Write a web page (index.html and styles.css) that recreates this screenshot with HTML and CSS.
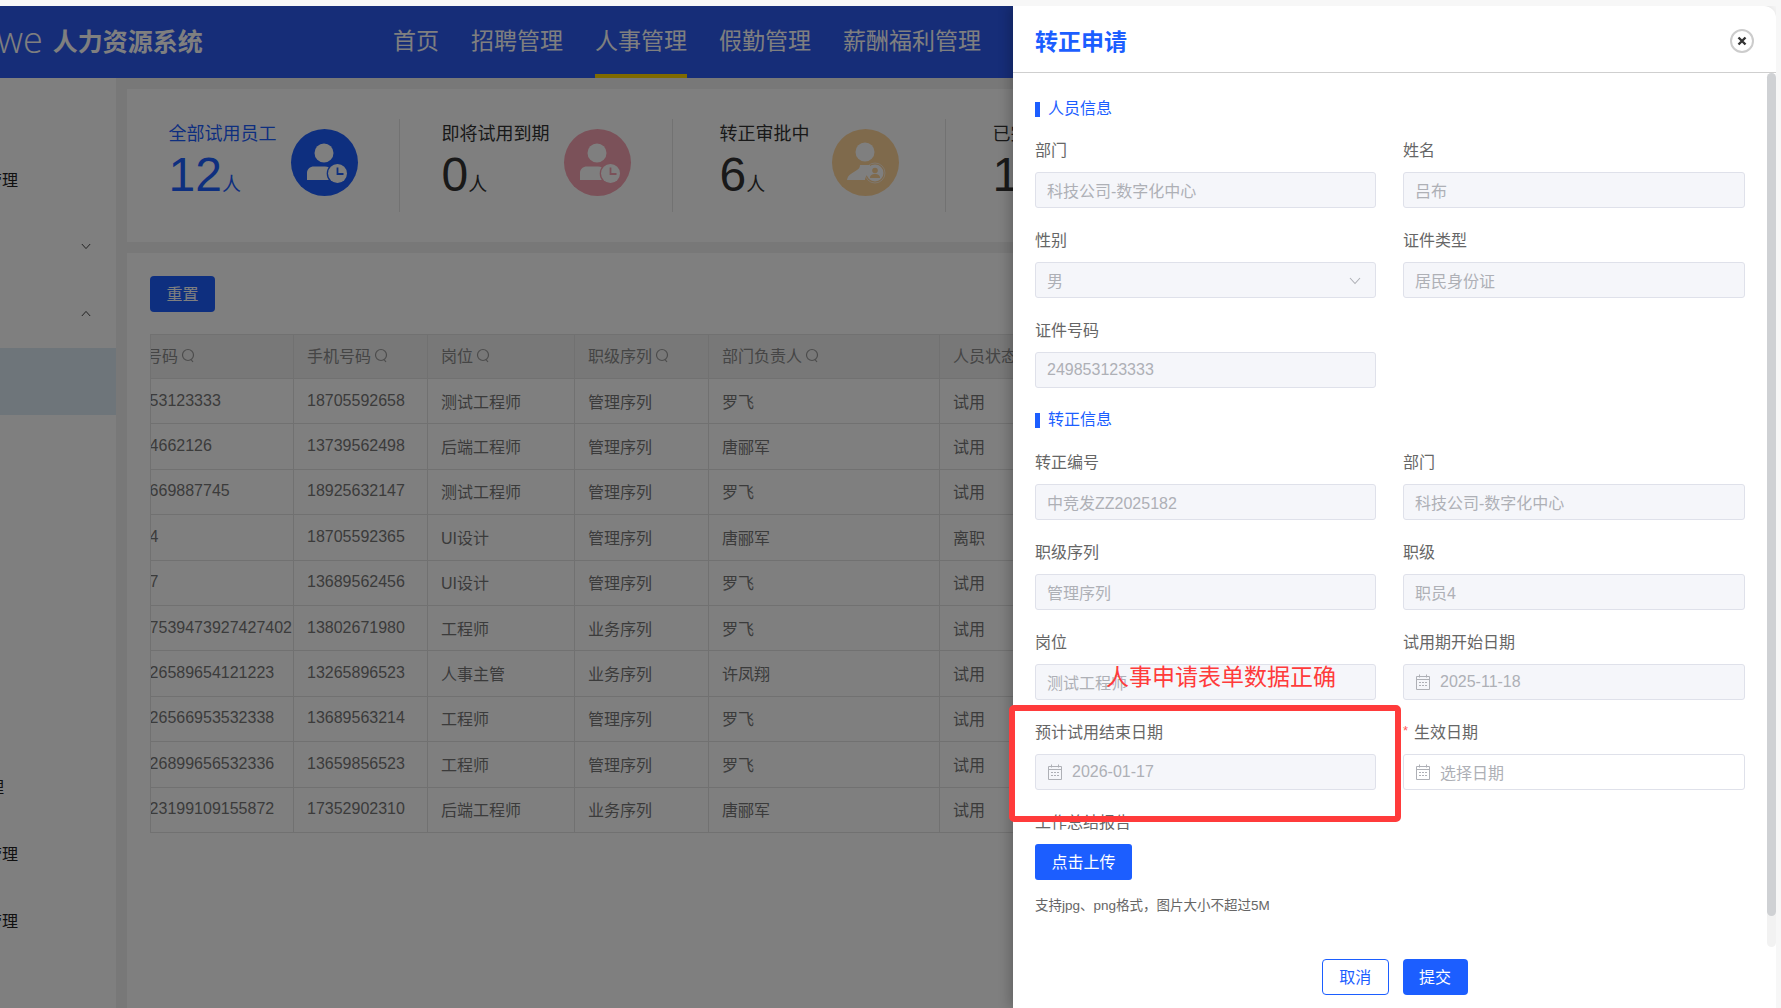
FILE: index.html
```html
<!DOCTYPE html>
<html lang="zh-CN">
<head>
<meta charset="utf-8">
<title>转正申请</title>
<link rel="stylesheet" href="styles.css">
</head>
<body>
<svg class="defs" width="0" height="0">
  <symbol id="cal" viewBox="0 0 14 16"><path d="M.5 2.5h13v13H.5zM.5 5.5h13M3.5 .5v3M10.5 .5v3" fill="none" stroke="currentColor"/><path d="M3 8h2v1H3zM6 8h2v1H6zM9 8h2v1H9zM3 11h2v1H3zM6 11h2v1H6zM9 11h2v1H9z" fill="currentColor"/></symbol>
  <symbol id="sch" viewBox="0 0 14 16"><circle cx="7" cy="7" r="5.5" fill="none" stroke="currentColor" stroke-width="1.2"/><path d="M10 11.5l2 2.5" stroke="currentColor" stroke-width="1.2"/></symbol>
  <symbol id="chev" viewBox="0 0 12 8"><path d="M1 1l5 5.5L11 1" fill="none" stroke="currentColor" stroke-width="1.1"/></symbol>
  <symbol id="user-clock" viewBox="0 0 67 67"><circle cx="33" cy="24" r="9.5" fill="#fff"/><path d="M16 51V44c0-4 3-6.500 7-6.500h11c3 0 5 1 5 3v10.500z" fill="#fff"/><circle cx="46.500" cy="44.500" r="10.800" fill="currentColor"/><circle cx="46.500" cy="44.500" r="9.500" fill="#fff"/><path d="M46.500 38.500v6.500h6" fill="none" stroke="currentColor" stroke-width="1.800"/></symbol>
  <symbol id="user-badge" viewBox="0 0 67 67"><circle cx="33" cy="23" r="9.500" fill="#fff"/><path d="M15 51c1-6 6-7 10-10 2-1 3-3 3-5h10c0 3 2 5 4 6-6 2-9 5-9 9z" fill="#fff"/><circle cx="43" cy="44" r="10" fill="none" stroke="#fff" stroke-width="1" opacity=".6"/><circle cx="43" cy="44" r="8.500" fill="#fff"/><circle cx="43" cy="41.500" r="2.800" fill="currentColor"/><path d="M38 49c0-3 2-4 5-4s5 1 5 4z" fill="currentColor"/></symbol>
</svg>
<div class="frame">
  <div class="app">
    <header class="topbar">
      <div class="logo"><span class="logo-we">we</span><strong class="logo-name">人力资源系统</strong></div>
      <nav class="nav">
        <a class="nav-item">首页</a>
        <a class="nav-item">招聘管理</a>
        <a class="nav-item active">人事管理</a>
        <a class="nav-item">假勤管理</a>
        <a class="nav-item">薪酬福利管理</a>
      </nav>
    </header>
    <div class="workspace">
      <aside class="sidebar">
        <div class="side-row"></div>
        <div class="side-row"><span class="side-text">员工管理</span></div>
        <div class="side-row"><svg class="side-chev"><use href="#chev"/></svg></div>
        <div class="side-row"><svg class="side-chev up"><use href="#chev"/></svg></div>
        <div class="side-row selected"></div>
        <div class="side-row"></div>
        <div class="side-row"></div>
        <div class="side-row"></div>
        <div class="side-row"></div>
        <div class="side-row"></div>
        <div class="side-row"><span class="side-text short">离职办理</span></div>
        <div class="side-row"><span class="side-text">合同管理</span></div>
        <div class="side-row"><span class="side-text">档案管理</span></div>
      </aside>
      <main class="main">
        <section class="stats">
          <div class="stat">
            <div class="stat-text primary"><div class="stat-title">全部试用员工</div><div class="stat-value">12<small>人</small></div></div>
            <svg class="stat-icon blue"><use href="#user-clock"/></svg>
          </div>
          <div class="stat">
            <div class="stat-text"><div class="stat-title">即将试用到期</div><div class="stat-value">0<small>人</small></div></div>
            <svg class="stat-icon pink"><use href="#user-clock"/></svg>
          </div>
          <div class="stat">
            <div class="stat-text"><div class="stat-title">转正审批中</div><div class="stat-value">6<small>人</small></div></div>
            <svg class="stat-icon tan"><use href="#user-badge"/></svg>
          </div>
          <div class="stat">
            <div class="stat-text"><div class="stat-title">已完成转正</div><div class="stat-value">1<small>人</small></div></div>
            <svg class="stat-icon tan"><use href="#user-badge"/></svg>
          </div>
        </section>
        <section class="list">
          <button class="btn-reset">重置</button>
          <div class="table-clip">
            <table class="grid">
              <colgroup><col class="c1"><col class="c2"><col class="c3"><col class="c4"><col class="c5"><col class="c6"></colgroup>
              <thead>
                <tr>
                  <th>证件号码<svg class="sch"><use href="#sch"/></svg></th>
                  <th>手机号码<svg class="sch"><use href="#sch"/></svg></th>
                  <th>岗位<svg class="sch"><use href="#sch"/></svg></th>
                  <th>职级序列<svg class="sch"><use href="#sch"/></svg></th>
                  <th>部门负责人<svg class="sch"><use href="#sch"/></svg></th>
                  <th>人员状态</th>
                </tr>
              </thead>
              <tbody>
                <tr><td>249853123333</td><td>18705592658</td><td>测试工程师</td><td>管理序列</td><td>罗飞</td><td>试用</td></tr>
                <tr><td>24984662126</td><td>13739562498</td><td>后端工程师</td><td>管理序列</td><td>唐郦军</td><td>试用</td></tr>
                <tr><td>2498669887745</td><td>18925632147</td><td>测试工程师</td><td>管理序列</td><td>罗飞</td><td>试用</td></tr>
                <tr><td>24984</td><td>18705592365</td><td>UI设计</td><td>管理序列</td><td>唐郦军</td><td>离职</td></tr>
                <tr><td>24987</td><td>13689562456</td><td>UI设计</td><td>管理序列</td><td>罗飞</td><td>试用</td></tr>
                <tr><td>24987539473927427402</td><td>13802671980</td><td>工程师</td><td>业务序列</td><td>罗飞</td><td>试用</td></tr>
                <tr><td>249826589654121223</td><td>13265896523</td><td>人事主管</td><td>业务序列</td><td>许凤翔</td><td>试用</td></tr>
                <tr><td>249826566953532338</td><td>13689563214</td><td>工程师</td><td>管理序列</td><td>罗飞</td><td>试用</td></tr>
                <tr><td>249826899656532336</td><td>13659856523</td><td>工程师</td><td>管理序列</td><td>罗飞</td><td>试用</td></tr>
                <tr><td>249823199109155872</td><td>17352902310</td><td>后端工程师</td><td>业务序列</td><td>唐郦军</td><td>试用</td></tr>
              </tbody>
            </table>
          </div>
        </section>
      </main>
    </div>
    <div class="scrim"></div>
  </div>

  <aside class="drawer">
    <div class="drawer-head">
      <h2 class="drawer-title">转正申请</h2>
      <svg class="close" viewBox="0 0 24 24"><circle cx="12" cy="12" r="11" fill="#fff" stroke="#ccc" stroke-width="2"/><path d="M8.500 8.500l7 7M15.500 8.500l-7 7" stroke="#333" stroke-width="2.400"/></svg>
    </div>
    <div class="drawer-body">
      <div class="form">
        <h3 class="sec">人员信息</h3>
        <div class="fields">
          <div class="field"><label>部门</label><div class="input off">科技公司-数字化中心</div></div>
          <div class="field"><label>姓名</label><div class="input off">吕布</div></div>
          <div class="field"><label>性别</label><div class="input off sel">男<svg class="sel-chev"><use href="#chev"/></svg></div></div>
          <div class="field"><label>证件类型</label><div class="input off">居民身份证</div></div>
          <div class="field"><label>证件号码</label><div class="input off">249853123333</div></div>
        </div>
        <h3 class="sec">转正信息</h3>
        <div class="fields">
          <div class="field"><label>转正编号</label><div class="input off">中竞发ZZ2025182</div></div>
          <div class="field"><label>部门</label><div class="input off">科技公司-数字化中心</div></div>
          <div class="field"><label>职级序列</label><div class="input off">管理序列</div></div>
          <div class="field"><label>职级</label><div class="input off">职员4</div></div>
          <div class="field"><label>岗位</label><div class="input off">测试工程师</div></div>
          <div class="field"><label>试用期开始日期</label><div class="input off"><svg class="cal"><use href="#cal"/></svg>2025-11-18</div></div>
          <div class="field"><label>预计试用结束日期</label><div class="input off"><svg class="cal"><use href="#cal"/></svg>2026-01-17</div></div>
          <div class="field"><label><i class="req">*</i>生效日期</label><div class="input"><svg class="cal"><use href="#cal"/></svg>选择日期</div></div>
          <div class="field"><label>工作总结报告</label><button class="btn-upload">点击上传</button><p class="hint">支持jpg、png格式，图片大小不超过5M</p></div>
        </div>
      </div>
      <div class="scrollbar"><div class="thumb"></div></div>
    </div>
    <div class="drawer-foot">
      <button class="btn-cancel">取消</button>
      <button class="btn-submit">提交</button>
    </div>
  </aside>

  <div class="mark-text">人事申请表单数据正确</div>
  <div class="mark-box"></div>
</div>
</body>
</html>
```
FILE: styles.css
```css
* { box-sizing: border-box; }
html, body { margin: 0; height: 100%; overflow: hidden; }
body {
  background: #f7f7f7;
  font-family: "Liberation Sans", "Noto Sans CJK SC", sans-serif;
  font-size: 16px;
  padding-top: 6px;
}
.defs { position: absolute; }
.frame {
  position: relative;
  width: 1776px;
  height: 1002px;
  overflow: hidden;
  display: flex;
}
.app {
  position: relative;
  width: 1013px;
  height: 100%;
  overflow: hidden;
  background: #fff;
  display: flex;
  flex-direction: column;
}

/* top bar */
.topbar { height: 72px; flex: none; background: #2c5af0; display: flex; color: #fff; }
.logo { width: 393px; flex: none; display: flex; align-items: center; gap: 10px; margin-left: -3px; padding-bottom: 4px; }
.logo-we { font-family: "Open Sans", sans-serif; font-weight: 300; font-size: 36px; line-height: 1; }
.logo-name { font-size: 25px; font-weight: 700; }
.nav { display: flex; gap: 32px; margin-left: 3px; }
.nav-item { display: flex; align-items: center; font-size: 23px; padding-bottom: 3px; border-bottom: 4px solid transparent; white-space: nowrap; }
.nav-item.active { border-bottom-color: #ffd400; }

/* layout */
.workspace { flex: 1; display: flex; min-height: 0; background: #f0f0f0; }
.sidebar { width: 116px; flex: none; background: #fff; overflow: hidden; }
.side-row { height: 67.4px; position: relative; display: flex; align-items: center; color: #222; }
.side-row.selected { background: #dcebf5; }
.side-text { margin-left: -46px; white-space: nowrap; }
.side-text.short { margin-left: -60px; }
.side-chev { width: 10px; height: 7px; margin-left: 81px; color: #333; }
.side-chev.up { transform: rotate(180deg); }
.main { flex: 1; min-width: 0; padding: 11px 0 0 11px; display: flex; flex-direction: column; gap: 11px; }

/* statistics */
.stats { height: 153px; flex: none; background: #fff; padding-top: 30px; display: flex; }
.stat { width: 273px; height: 93px; flex: none; border-right: 1px solid #e4e4e4; display: flex; justify-content: center; gap: 14px; color: #333; }
.stat-text { min-width: 98px; padding-top: 1px; }
.stat-text.primary { color: #1c5eff; }
.stat-title { font-size: 18px; line-height: 28px; white-space: nowrap; }
.stat-value { font-size: 48px; line-height: 54px; white-space: nowrap; }
.stat-value small { font-size: 19px; }
.stat-icon { width: 67px; height: 67px; border-radius: 50%; margin-top: 10px; flex: none; }
.stat-icon.blue { background: #1c5eff; color: #1c5eff; }
.stat-icon.pink { background: #f7a2b2; color: #f7a2b2; }
.stat-icon.tan { background: #ffd499; color: #ffd499; }

/* list */
.list { flex: 1; background: #fff; padding: 23px 0 0 23px; min-height: 0; }
.btn-reset { display: block; width: 65px; height: 36px; border: 0; border-radius: 4px; background: #1c5eff; color: #fff; font: inherit; padding: 0 0 2px; }
.table-clip { margin-top: 22px; overflow: hidden; border-left: 1px solid #e2e2e2; }
.grid { margin-left: -51px; width: 1000px; table-layout: fixed; border-collapse: separate; border-spacing: 0; }
.c1 { width: 194px; } .c2 { width: 134px; } .c3 { width: 147px; } .c4 { width: 134px; } .c5 { width: 231px; } .c6 { width: 161px; }
.grid th, .grid td { padding: 0 0 0 13px; border-right: 1px solid #e2e2e2; border-bottom: 1px solid #e2e2e2; text-align: left; white-space: nowrap; overflow: hidden; }
.grid th { height: 45px; padding-bottom: 3px; background: #f0f0f0; color: #8a8a8a; font-weight: 400; border-top: 1px solid #e2e2e2; }
.grid td { height: 45.4px; padding-bottom: 1px; color: #777; }
.grid th:first-child, .grid td:first-child { padding-left: 14px; }
.sch { width: 14px; height: 16px; margin-left: 3px; vertical-align: -2px; color: #999; }

/* dim layer */
.scrim { position: absolute; inset: 0; background: rgba(0, 0, 0, .5); }

/* drawer */
.drawer { position: relative; width: 763px; flex: none; background: #fff; border-top-right-radius: 12px; display: flex; flex-direction: column; box-shadow: -4px 0 12px rgba(0, 0, 0, .2); }
.drawer-head { height: 67px; flex: none; display: flex; align-items: center; justify-content: space-between; padding: 2px 22px 0 22px; border-bottom: 1px solid #cfcfcf; }
.drawer-title { margin: 0; font-size: 23px; font-weight: 700; color: #1c5eff; }
.close { width: 24px; height: 24px; margin-top: 2px; }
.drawer-body { flex: 1; display: flex; min-height: 0; }
.form { flex: 1; padding: 25px 22px 0; min-width: 0; }
.sec { margin: 0 0 19px; padding-left: 13px; height: 22px; line-height: 22px; font-size: 16px; font-weight: 400; color: #1c5eff; position: relative; display: flex; align-items: center; }
.sec::before { content: ""; position: absolute; left: 0; top: 4px; width: 5px; height: 15px; background: #1c5eff; }
.fields { display: grid; grid-template-columns: 340.5px 342px; column-gap: 27.5px; row-gap: 21px; margin-bottom: 21px; }
.fields + .sec { margin-bottom: 20px; }
.field { min-width: 0; }
.field label { display: block; height: 23px; line-height: 24px; margin-bottom: 10px; color: #666; white-space: nowrap; }
.req { font-style: normal; color: #ff5a5a; font-size: 13px; display: inline-block; width: 11px; vertical-align: 3px; line-height: 1; }
.input { height: 36px; display: flex; align-items: center; padding: 0 11px; border: 1px solid #dfe1ea; border-radius: 3px; color: #aeb0b6; background: #fff; position: relative; white-space: nowrap; }
.input.off { background: #f5f6fa; }
.sel-chev { position: absolute; right: 14px; top: 14px; width: 12px; height: 8px; color: #aeb0b6; }
.cal { width: 14px; height: 16px; margin: 0 10px 0 1px; flex: none; color: #aeb0b6; }
.btn-upload { display: block; width: 97px; height: 36px; padding: 0 0 2px; border: 0; border-radius: 3px; background: #1c5eff; color: #fff; font: inherit; }
.hint { margin: 15px 0 0; height: 22px; line-height: 22px; font-size: 13.5px; color: #666; white-space: nowrap; }
.scrollbar { width: 9px; flex: none; background: #f2f2f2; border-radius: 5px; }
.thumb { height: 843px; background: #cfd1d4; border-radius: 5px; }
.drawer-foot { height: 61px; flex: none; display: flex; justify-content: center; align-items: flex-start; gap: 13.5px; padding-top: 12px; }
.btn-cancel, .btn-submit { height: 36px; padding: 0 0 2px; border-radius: 4px; font: inherit; }
.btn-cancel { width: 67.5px; background: #fff; border: 1px solid #1c5eff; color: #1c5eff; }
.btn-submit { width: 65px; background: #1c5eff; border: 0; color: #fff; }

/* annotation drawn over the screenshot */
.mark-text { position: absolute; left: 1106px; top: 653px; font-size: 23px; line-height: 36px; color: #ff3b3b; white-space: nowrap; }
.mark-box { position: absolute; left: 1009px; top: 699px; width: 392px; height: 117px; border: 6px solid #ff3b3b; border-radius: 5px; }
```
